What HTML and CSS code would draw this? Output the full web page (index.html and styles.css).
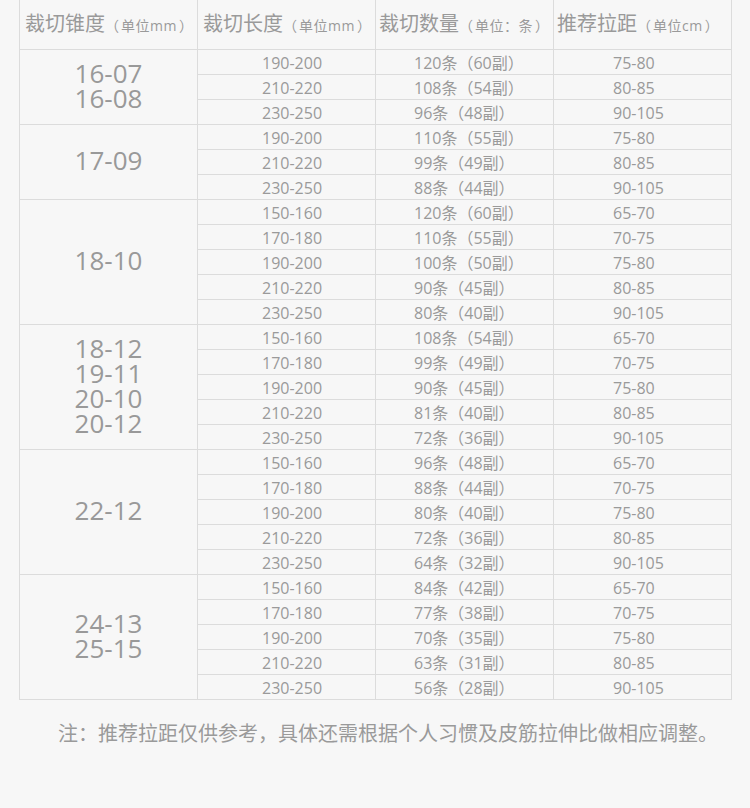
FILE: index.html
```html
<!DOCTYPE html>
<html lang="zh">
<head>
<meta charset="utf-8">
<link rel="stylesheet" href="styles.css">
</head>
<body>
<div class="page">
<table class="spec">
<colgroup><col class="c"><col class="c"><col class="c"><col class="c"></colgroup>
<thead>
<tr class="head">
<th class="h1">裁切锥度<small>（<span class="u">单位mm</span>）</small></th>
<th class="h2">裁切长度<small>（<span class="u">单位mm</span>）</small></th>
<th class="h3">裁切数量<small>（<span class="u">单位：条</span>）</small></th>
<th class="h4">推荐拉距<small>（<span class="u">单位cm</span>）</small></th>
</tr>
</thead>
<tbody>
<tr><td class="taper" rowspan="3">16-07<br>16-08</td><td class="len">190-200</td><td class="qty">120条（60副）</td><td class="dist">75-80</td></tr>
<tr><td class="len">210-220</td><td class="qty">108条（54副）</td><td class="dist">80-85</td></tr>
<tr><td class="len">230-250</td><td class="qty">96条（48副）</td><td class="dist">90-105</td></tr>

<tr><td class="taper" rowspan="3">17-09</td><td class="len">190-200</td><td class="qty">110条（55副）</td><td class="dist">75-80</td></tr>
<tr><td class="len">210-220</td><td class="qty">99条（49副）</td><td class="dist">80-85</td></tr>
<tr><td class="len">230-250</td><td class="qty">88条（44副）</td><td class="dist">90-105</td></tr>

<tr><td class="taper" rowspan="5">18-10</td><td class="len">150-160</td><td class="qty">120条（60副）</td><td class="dist">65-70</td></tr>
<tr><td class="len">170-180</td><td class="qty">110条（55副）</td><td class="dist">70-75</td></tr>
<tr><td class="len">190-200</td><td class="qty">100条（50副）</td><td class="dist">75-80</td></tr>
<tr><td class="len">210-220</td><td class="qty">90条（45副）</td><td class="dist">80-85</td></tr>
<tr><td class="len">230-250</td><td class="qty">80条（40副）</td><td class="dist">90-105</td></tr>

<tr><td class="taper" rowspan="5">18-12<br>19-11<br>20-10<br>20-12</td><td class="len">150-160</td><td class="qty">108条（54副）</td><td class="dist">65-70</td></tr>
<tr><td class="len">170-180</td><td class="qty">99条（49副）</td><td class="dist">70-75</td></tr>
<tr><td class="len">190-200</td><td class="qty">90条（45副）</td><td class="dist">75-80</td></tr>
<tr><td class="len">210-220</td><td class="qty">81条（40副）</td><td class="dist">80-85</td></tr>
<tr><td class="len">230-250</td><td class="qty">72条（36副）</td><td class="dist">90-105</td></tr>

<tr><td class="taper" rowspan="5">22-12</td><td class="len">150-160</td><td class="qty">96条（48副）</td><td class="dist">65-70</td></tr>
<tr><td class="len">170-180</td><td class="qty">88条（44副）</td><td class="dist">70-75</td></tr>
<tr><td class="len">190-200</td><td class="qty">80条（40副）</td><td class="dist">75-80</td></tr>
<tr><td class="len">210-220</td><td class="qty">72条（36副）</td><td class="dist">80-85</td></tr>
<tr><td class="len">230-250</td><td class="qty">64条（32副）</td><td class="dist">90-105</td></tr>

<tr><td class="taper" rowspan="5">24-13<br>25-15</td><td class="len">150-160</td><td class="qty">84条（42副）</td><td class="dist">65-70</td></tr>
<tr><td class="len">170-180</td><td class="qty">77条（38副）</td><td class="dist">70-75</td></tr>
<tr><td class="len">190-200</td><td class="qty">70条（35副）</td><td class="dist">75-80</td></tr>
<tr><td class="len">210-220</td><td class="qty">63条（31副）</td><td class="dist">80-85</td></tr>
<tr><td class="len">230-250</td><td class="qty">56条（28副）</td><td class="dist">90-105</td></tr>
</tbody>
</table>
<p class="note">注：推荐拉距仅供参考，具体还需根据个人习惯及皮筋拉伸比做相应调整。</p>
</div>
</body>
</html>
```

FILE: styles.css
```css
html, body {
  margin: 0;
  padding: 0;
  background: #f7f7f7;
}
.page {
  width: 750px;
  height: 808px;
  overflow: hidden;
  background: #f7f7f7;
  font-family: "Open Sans", "Noto Sans CJK SC", sans-serif;
  color: #999;
}
.spec {
  margin-left: 19px;
  border-collapse: collapse;
  table-layout: fixed;
  width: 713px;
}
.c { width: 178px; }
.spec th, .spec td {
  border: 1px solid #dcdcdc;
  padding: 0;
}
.spec thead th {
  border-top: none;
  height: 49px;
  text-align: left;
  font-weight: normal;
  font-size: 20px;
  color: #9a9a9a;
  white-space: nowrap;
  padding-bottom: 4px;
  box-sizing: border-box;
  vertical-align: middle;
}
.spec thead small {
  font-size: 14px;
}
.spec thead .u {
  margin: 0 2px;
  letter-spacing: 0.5px;
}
.spec thead th.h1 { padding-left: 5px; }
.spec thead th.h2 { padding-left: 5px; }
.spec thead th.h3 { padding-left: 3px; }
.spec thead th.h4 { padding-left: 3px; }
.spec tbody tr {
  height: 25px;
}
.spec tbody td {
  font-size: 16px;
  line-height: 20px;
  height: 21px;
  padding-top: 3px;
  color: #9a9a9a;
  white-space: nowrap;
  vertical-align: top;
}
.spec tbody td.taper {
  text-align: center;
  vertical-align: middle;
  font-size: 26px;
  line-height: 25px;
  padding-top: 0;
  padding-bottom: 2px;
  color: #999;
}
.spec tbody td.len { padding-left: 64px; }
.spec tbody td.qty { padding-left: 38px; }
.spec tbody td.dist { padding-left: 59px; }
.note {
  margin: 19px 0 0 0;
  padding-left: 26px;
  text-align: center;
  font-family: "Noto Sans CJK SC", sans-serif;
  font-size: 20px;
  line-height: 28px;
  color: #9a9a9a;
}
```
